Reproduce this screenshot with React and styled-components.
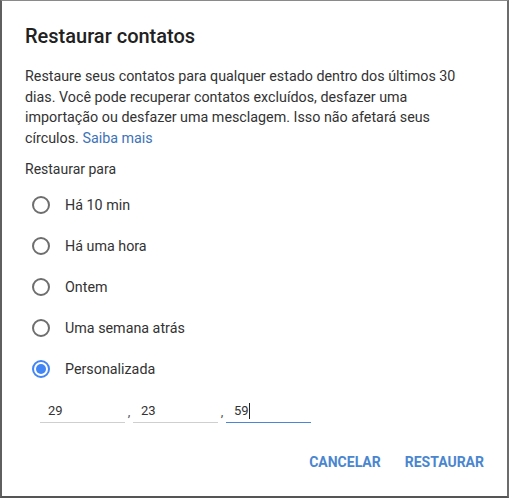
import React, { useState } from "react";
import styled, { createGlobalStyle } from "styled-components";

const GlobalStyle = createGlobalStyle`
  html, body {
    margin: 0;
    padding: 0;
    background: #fff;
  }
  body {
    font-family: Roboto, "Noto Sans", Arial, sans-serif;
  }
`;

const Dialog = styled.div`
  box-sizing: border-box;
  width: 509px;
  height: 498px;
  background: #fff;
  border-top: 1px solid #8a8a8a;
  border-left: 2px solid #5f5f5f;
  border-right: 2px solid #6c6c6c;
  border-bottom: 2px solid #555;
  padding: 22px 23px 0 23px;
  display: flex;
  flex-direction: column;
`;

const Title = styled.h1`
  margin: 0;
  font-size: 20px;
  font-weight: 500;
  color: #212121;
  line-height: 26px;
`;

const Description = styled.p`
  margin: 17px 0 0;
  max-width: 456px;
  font-size: 14.3px;
  line-height: 20.5px;
  color: #333;
`;

const Link = styled.a`
  color: #3d73b8;
  text-decoration: none;
`;

const Label = styled.div`
  margin-top: 11px;
  font-size: 14px;
  line-height: 20px;
  color: #333;
`;

const RadioList = styled.div`
  display: flex;
  flex-direction: column;
  margin-top: 5px;
`;

const RadioRow = styled.label`
  display: flex;
  align-items: center;
  height: 41px;
  gap: 15px;
  padding-left: 7px;
  font-size: 14.3px;
  color: #333;
  cursor: pointer;
`;

const RadioCircle = styled.span`
  box-sizing: border-box;
  width: 18px;
  height: 18px;
  border-radius: 50%;
  border: 2px solid ${(p) => (p.$checked ? "#4285f4" : "#6e6e6e")};
  display: flex;
  align-items: center;
  justify-content: center;

  &::after {
    content: "";
    width: 10px;
    height: 10px;
    border-radius: 50%;
    background: #4285f4;
    display: ${(p) => (p.$checked ? "block" : "none")};
  }
`;

const Fields = styled.div`
  display: flex;
  align-items: center;
  margin-top: 12px;
  padding-left: 15px;
`;

const Field = styled.div`
  box-sizing: border-box;
  width: 85px;
  height: 22px;
  border-bottom: 1px solid ${(p) => (p.$active ? "#4a86d4" : "#cfcfcf")};
  padding: 0 8px;
  font-size: 13px;
  line-height: 20px;
  color: #333;
  display: flex;
  align-items: flex-start;
`;

const Sep = styled.span`
  width: 8px;
  text-align: center;
  font-size: 13px;
  color: #555;
  margin-top: -2px;
`;

const Cursor = styled.span`
  display: inline-block;
  width: 1px;
  height: 16px;
  margin-top: 2px;
  background: #222;
`;

const Actions = styled.div`
  display: flex;
  justify-content: flex-end;
  gap: 24px;
  margin-top: 31px;
`;

const Button = styled.button`
  border: none;
  background: none;
  padding: 0;
  font-family: Roboto, "Noto Sans", Arial, sans-serif;
  font-size: 14px;
  font-weight: 700;
  color: #4a86cf;
  cursor: pointer;
`;

const options = ["Há 10 min", "Há uma hora", "Ontem", "Uma semana atrás", "Personalizada"];

export default function App() {
  const [selected, setSelected] = useState(4);
  return (
    <>
      <GlobalStyle />
      <Dialog>
        <Title>Restaurar contatos</Title>
        <Description>
          Restaure seus contatos para qualquer estado dentro dos últimos 30 dias. Você pode
          recuperar contatos excluídos, desfazer uma importação ou desfazer uma mesclagem.
          Isso não afetará seus círculos. <Link href="#">Saiba mais</Link>
        </Description>
        <Label>Restaurar para</Label>
        <RadioList>
          {options.map((opt, i) => (
            <RadioRow key={opt} onClick={() => setSelected(i)}>
              <RadioCircle $checked={selected === i} />
              {opt}
            </RadioRow>
          ))}
        </RadioList>
        <Fields>
          <Field>29</Field>
          <Sep>,</Sep>
          <Field>23</Field>
          <Sep>,</Sep>
          <Field $active>
            59<Cursor />
          </Field>
        </Fields>
        <Actions>
          <Button>CANCELAR</Button>
          <Button>RESTAURAR</Button>
        </Actions>
      </Dialog>
    </>
  );
}
